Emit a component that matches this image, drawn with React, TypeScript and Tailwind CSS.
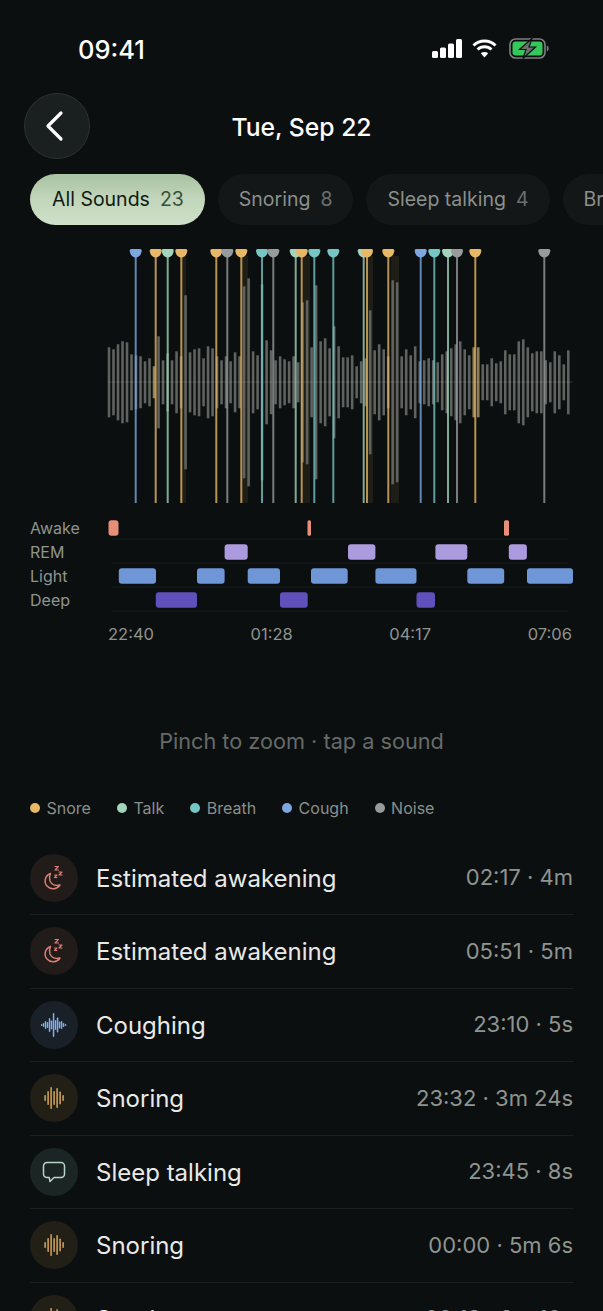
const amps = [
  35, 33, 38, 41, 40, 28, 27, 26, 21, 24, 16, 46, 22, 29, 22, 31, 26, 87, 30, 33, 34, 24, 36, 34, 26, 22, 26, 21, 30, 26,
  96, 104, 31, 27, 98, 42, 32, 22, 26, 23, 21, 26, 20, 80, 82, 35, 97, 41, 44, 34, 56, 36, 25, 25,
  27, 16, 21, 24, 72, 32, 38, 33, 26, 102, 100, 26, 33, 27, 36, 21, 22, 24, 22, 20, 28, 31, 34, 38, 41, 33, 27, 35, 35,
  18, 18, 24, 19, 21, 32, 28, 28, 41, 43, 35, 29, 31, 31, 22, 20, 31, 27, 18, 32,
];
const goldBars = [10, 81, 82];

const SNORE = "#e8b866";
const TALK = "#a3d4bc";
const BREATH = "#74c7c4";
const COUGH = "#7ea6e0";
const NOISE = "#979b9b";

const pins: [number, string][] = [
  [135.7, COUGH], [155.7, SNORE], [167.7, TALK], [181.3, SNORE], [216.3, SNORE], [227.3, NOISE], [241.3, SNORE],
  [262, BREATH], [273.3, NOISE], [295.7, TALK], [301.7, SNORE], [314.3, BREATH], [333.3, BREATH], [363.7, TALK],
  [367, SNORE], [388.3, SNORE], [420.7, COUGH], [434.3, BREATH], [448, TALK], [457, NOISE], [475.3, SNORE], [544.3, NOISE],
];

const bands = [
  [182, 4], [242, 6], [303, 7], [368, 5], [391, 8],
];

const stages: { name: string; color: string; bars: [number, number][] }[] = [
  { name: "Awake", color: "#e88f7a", bars: [[108.5, 118.5], [307.5, 311], [504, 509]] },
  { name: "REM", color: "#ab9ade", bars: [[224.6, 247.7], [348, 375.4], [435.4, 467.3], [508.8, 526.9]] },
  { name: "Light", color: "#6f97d8", bars: [[118.8, 156], [197, 224.6], [247.7, 280], [311, 347.7], [375.4, 416.5], [467.3, 504.2], [527, 573]] },
  { name: "Deep", color: "#5f50bb", bars: [[155.8, 197], [280, 307.7], [416.5, 435]] },
];

const legend = [
  { label: "Snore", color: SNORE },
  { label: "Talk", color: TALK },
  { label: "Breath", color: BREATH },
  { label: "Cough", color: COUGH },
  { label: "Noise", color: NOISE },
];

const chips = [
  { label: "Snoring", count: "8" },
  { label: "Sleep talking", count: "4" },
  { label: "Breath", count: "6" },
];

const rows = [
  { kind: "moon", title: "Estimated awakening", meta: "02:17 · 4m" },
  { kind: "moon", title: "Estimated awakening", meta: "05:51 · 5m" },
  { kind: "cough", title: "Coughing", meta: "23:10 · 5s" },
  { kind: "snore", title: "Snoring", meta: "23:32 · 3m 24s" },
  { kind: "talk", title: "Sleep talking", meta: "23:45 · 8s" },
  { kind: "snore", title: "Snoring", meta: "00:00 · 5m 6s" },
  { kind: "snore", title: "Snoring", meta: "00:12 · 2m 10s" },
];

const StatusIcons = () => (
  <div className="flex items-center gap-[10px]">
    <svg width="30" height="19" viewBox="0 0 30 19" fill="#fff">
      <rect x="0" y="12" width="6" height="7" rx="1.5" />
      <rect x="8" y="8.5" width="6" height="10.5" rx="1.5" />
      <rect x="16" y="4.5" width="6" height="14.5" rx="1.5" />
      <rect x="24" y="0" width="6" height="19" rx="1.5" />
    </svg>
    <svg width="25" height="19" viewBox="0 0 25 19" fill="none" stroke="#fff" strokeWidth="3">
      <path d="M1.5 6.5C7.5 0.6 17.5 0.6 23.5 6.5" />
      <path d="M5.5 10.5C9.5 6.8 15.5 6.8 19.5 10.5" />
      <path d="M12.5 18.5L8.8 14.3C10.8 12.7 14.2 12.7 16.2 14.3Z" fill="#fff" stroke="none" />
    </svg>
    <svg width="40" height="21" viewBox="0 0 40 21" fill="none" className="ml-[2px]">
      <rect x="1" y="1" width="35" height="19" rx="5.5" stroke="#7d807f" strokeWidth="1.6" />
      <rect x="3.5" y="3.5" width="30" height="14" rx="3.2" fill="#34c759" />
      <path d="M37.8 7.5c1.2.4 1.8 1.6 1.8 3s-.6 2.6-1.8 3z" fill="#7d807f" />
      <path d="M23 0.5L10.5 11.5h6.5L14 20.5 26.5 9h-6.5z" fill="#6d706f" stroke="#0b0f0f" strokeWidth="1.2" />
    </svg>
  </div>
);

const SoundChart = () => (
  <svg width="603" height="260" viewBox="0 245 603 260" className="mt-5 block">
    {bands.map(([x, w]) => (
      <rect key={x} x={x} y="256" width={w} height="247" fill={SNORE} opacity="0.09" />
    ))}
    {amps.map((a, i) => {
      const x = 109 + i * 4.503;
      return (
        <rect
          key={i}
          x={x - 1.3}
          y={382.3 - a}
          width="2.6"
          height={a * 2}
          fill={goldBars.includes(i) ? "#8f7f58" : "#5f625f"}
        />
      );
    })}
    <rect x="108" y="381.5" width="465" height="1" fill="#fff" opacity="0.14" />
    {pins.map(([x, c]) => (
      <g key={x}>
        <rect x={x - 1} y="255" width="2" height="248" fill={c} opacity="0.78" />
        <path
          d={`M${x - 6} 250.5a1.5 1.5 0 0 1 1.5-1.5h9a1.5 1.5 0 0 1 1.5 1.5c0 3.6-2.7 7-6 7s-6-3.4-6-7z`}
          fill={c}
        />
      </g>
    ))}
  </svg>
);

const StageRows = () => (
  <div className="mt-[11px] flex flex-col">
    {stages.map((s) => (
      <div key={s.name} className="flex h-6 items-center">
        <div className="w-[108px] shrink-0 pl-[30px] text-[16px] text-[#8f9490]">{s.name}</div>
        <svg width="470" height="24" viewBox="108 0 470 24" className="block shrink-0">
          <rect x="112" y="22.5" width="456" height="1" fill="#1a1e1e" />
          {s.bars.map(([a, b]) => (
            <rect key={a} x={a} y="4.3" width={b - a} height="15.4" rx={b - a < 6 ? 1.5 : 3} fill={s.color} />
          ))}
        </svg>
      </div>
    ))}
  </div>
);

const MoonIcon = () => (
  <svg width="24" height="28" viewBox="0 0 24 28" fill="none" stroke="#d97f73" strokeWidth="1.5" strokeLinecap="round" strokeLinejoin="round">
    <path d="M8.5 9.5C3 11.5 1.5 18 5 22c3.6 4 10 3.5 13-1-4.5 1.2-8.5-.6-10-4-.9-2.4-.7-5 .5-7.5z" />
    <path d="M13 2.5h3.5L13 6h3.5" strokeWidth="1.2" />
    <path d="M17 8h3l-3 3h3" strokeWidth="1.2" />
    <path d="M12.5 11h2.5l-2.5 2.5H15" strokeWidth="1.1" />
  </svg>
);

const WaveIcon = () => {
  const hs = [2, 4, 8, 6, 14, 9, 24, 10, 15, 7, 8, 4, 2];
  return (
    <svg width="26" height="26" viewBox="0 0 26 26">
      {hs.map((h, i) => (
        <rect key={i} x={i * 2 - 0.2} y={13 - h / 2} width="1.5" height={h} rx="0.75" fill="#7fb0f2" />
      ))}
    </svg>
  );
};

const SnoreIcon = () => {
  const hs = [6, 14, 22, 14, 20, 13, 6];
  return (
    <svg width="20" height="24" viewBox="0 0 20 24">
      {hs.map((h, i) => (
        <rect key={i} x={i * 3 + 0.4} y={12 - h / 2} width="1.4" height={h} rx="0.7" fill="#e3b062" />
      ))}
    </svg>
  );
};

const TalkIcon = () => (
  <svg width="24" height="22" viewBox="0 0 24 22" fill="none" stroke="#b8d6c6" strokeWidth="1.5" strokeLinejoin="round">
    <path d="M5 1.5h14a3.5 3.5 0 0 1 3.5 3.5v8a3.5 3.5 0 0 1-3.5 3.5h-7L8 20.5l-.8-4H5A3.5 3.5 0 0 1 1.5 13V5A3.5 3.5 0 0 1 5 1.5z" />
  </svg>
);

const RowIcon = ({ kind }: { kind: string }) => {
  if (kind === "moon")
    return (
      <div className="flex h-12 w-12 shrink-0 items-center justify-center rounded-full bg-[#211b1a]">
        <MoonIcon />
      </div>
    );
  if (kind === "cough")
    return (
      <div className="flex h-12 w-12 shrink-0 items-center justify-center rounded-full bg-[#192027]">
        <WaveIcon />
      </div>
    );
  if (kind === "talk")
    return (
      <div className="flex h-12 w-12 shrink-0 items-center justify-center rounded-full bg-[#1b2524]">
        <TalkIcon />
      </div>
    );
  return (
    <div className="flex h-12 w-12 shrink-0 items-center justify-center rounded-full bg-[#221f17]">
      <SnoreIcon />
    </div>
  );
};

export default function App() {
  return (
    <div
      className="h-[1311px] w-[603px] overflow-hidden bg-[#0b0f0f] text-white"
      style={{ fontFamily: "Inter, 'Noto Sans', sans-serif" }}
    >
      {/* status bar */}
      <div className="flex h-[93px] items-start justify-between pl-[78px] pr-[54px] pt-[35px]">
        <span className="text-[25.5px] leading-[30px] font-medium">09:41</span>
        <div className="pt-[3px]">
          <StatusIcons />
        </div>
      </div>

      {/* header */}
      <div className="relative flex h-[66px] items-center justify-center">
        <button className="absolute left-6 top-0 flex h-[66px] w-[66px] items-center justify-center rounded-full border border-[#2c3131] bg-[#1a1f1f] pr-[6px]">
          <svg width="22" height="32" viewBox="0 0 22 32" fill="none" stroke="#fff" strokeWidth="3.2" strokeLinecap="round" strokeLinejoin="round">
            <path d="M18 3L5 16l13 13" />
          </svg>
        </button>
        <h1 className="pt-1 text-[24.7px] font-medium">Tue, Sep 22</h1>
      </div>

      {/* filters */}
      <div className="mt-[15px] flex h-[51px] gap-[13px] overflow-hidden pl-[30px]">
        <div className="flex shrink-0 items-center gap-[10px] rounded-full bg-gradient-to-b from-[#a9c2a3] via-[#c2d6bb] to-[#cfe0c8] pl-[22px] pr-[21px] pt-px text-[19.5px]">
          <span className="text-[#0f1a12]">All Sounds</span>
          <span className="text-[#35503d]">23</span>
        </div>
        {chips.map((c) => (
          <div key={c.label} className="flex shrink-0 items-center gap-[10px] rounded-full bg-[#131717] px-[21px] pt-px text-[19.5px]">
            <span className="text-[#8b908c]">{c.label}</span>
            <span className="text-[#6a706c]">{c.count}</span>
          </div>
        ))}
      </div>

      <SoundChart />
      <StageRows />

      <div className="mt-[10px] flex w-[572px] justify-between pl-[108px] text-[16.5px] leading-6 text-[#8f9490]">
        <span>22:40</span>
        <span>01:28</span>
        <span>04:17</span>
        <span>07:06</span>
      </div>

      <p className="mt-[80px] text-center text-[21.7px] leading-[30px] text-[#666b69]">Pinch to zoom · tap a sound</p>

      {/* legend */}
      <div className="mt-[40px] flex h-6 items-center gap-[26px] pl-[30px] text-[16px] text-[#8a8f8c]">
        {legend.map((l) => (
          <div key={l.label} className="flex items-center gap-[6.5px]">
            <span className="h-[10px] w-[10px] rounded-full" style={{ backgroundColor: l.color }} />
            {l.label}
          </div>
        ))}
      </div>

      {/* sounds */}
      <div className="mt-[21.5px] px-[30px]">
        {rows.map((r, i) => (
          <div key={i} className="flex h-[73.5px] items-center gap-[18px] border-b border-[#1b1f1f]">
            <RowIcon kind={r.kind} />
            <span className="flex-1 pt-[2px] text-[24px] text-[#e9eae7]">{r.title}</span>
            <span className="text-[22px] text-[#8f9490]">{r.meta}</span>
          </div>
        ))}
      </div>
    </div>
  );
}
